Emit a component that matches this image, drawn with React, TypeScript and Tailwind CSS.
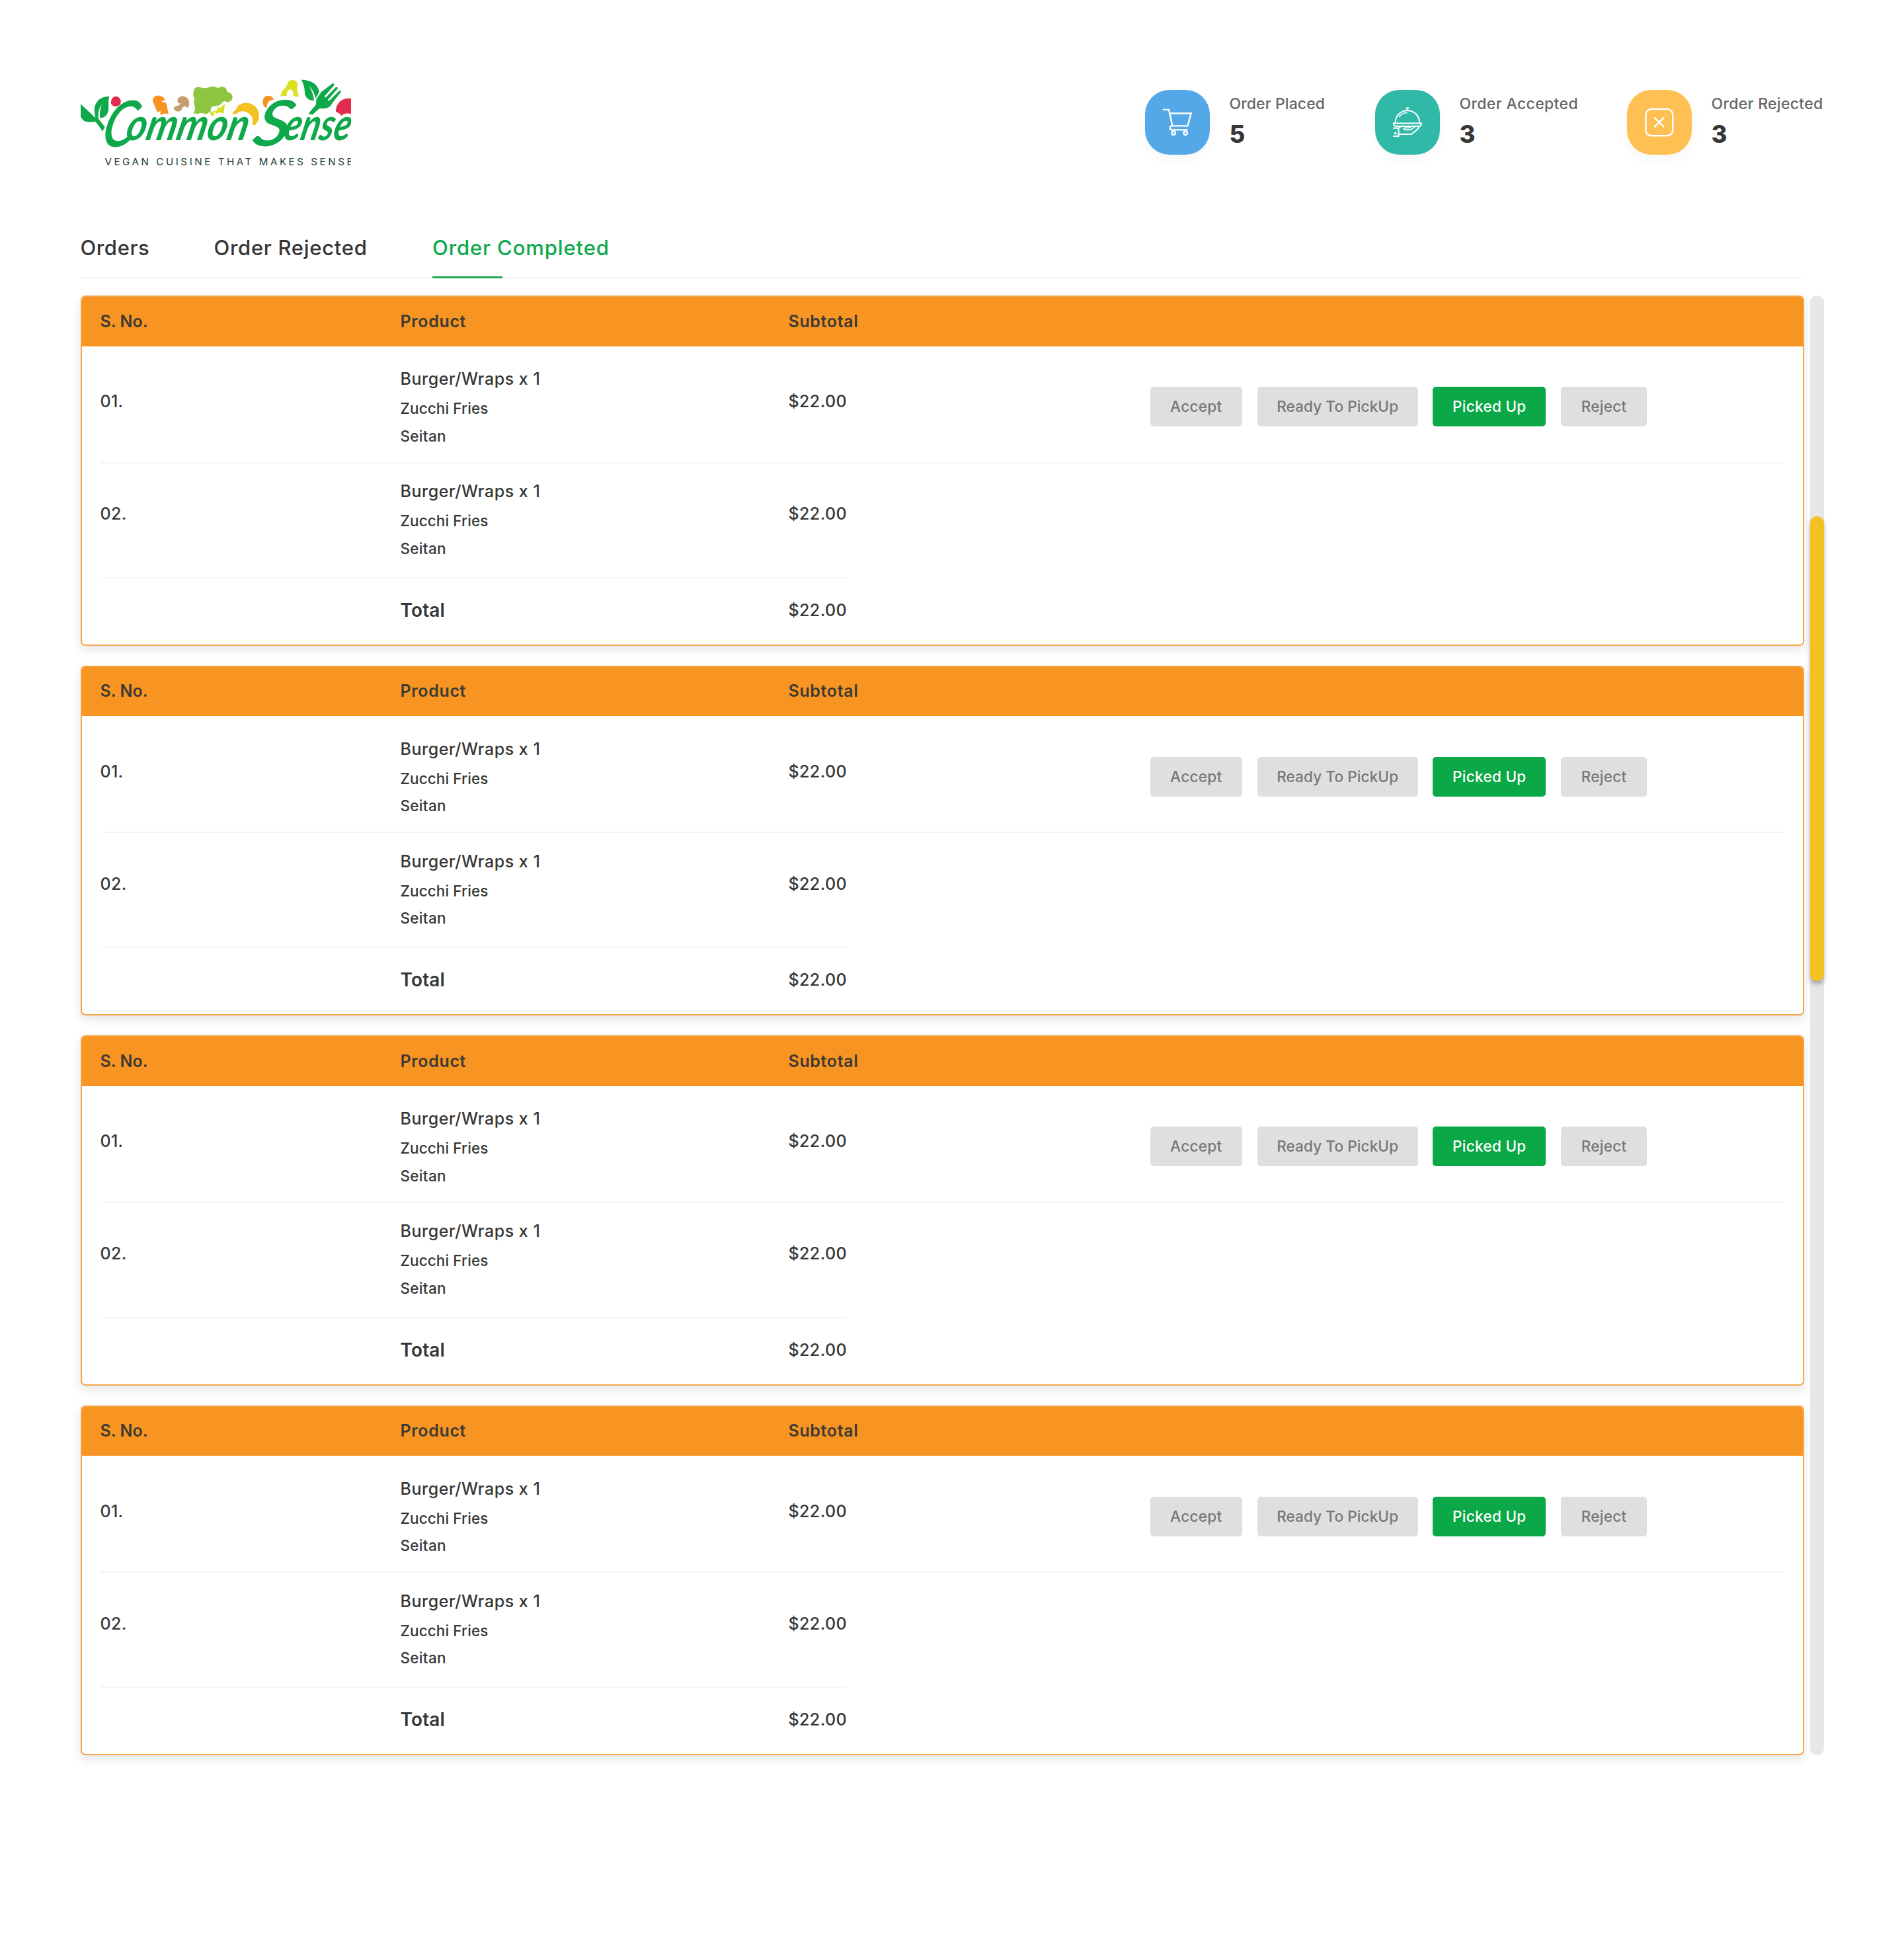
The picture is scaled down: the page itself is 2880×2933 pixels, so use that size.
import type { ReactNode } from 'react';

const GREEN = '#0fa84b';

function Logo() {
  return (
    <svg className="block h-[133.3px] w-[409.7px]" viewBox="64 55 1229 400" role="img" aria-label="Common Sense">
      {/* sprout */}
      <path fill={GREEN} d="M64 173 L131 236 C127 212 123 192 131 176 C141 151 163 139 193 138 C189 158 191 180 190 200 C187 222 172 237 151 238 C149 214 152 193 160 174 C146 193 142 214 145 240 L173 276 L164 297 L132 254 C108 257 82 256 73 244 L64 232 Z" />
      {/* vegetables */}
      <path fill="#e12d4e" d="M202 163 C203 146 214 137 225 138 C238 139 248 151 246 166 C243 180 231 186 220 184 C208 182 200 175 202 163 Z" />
      <path fill="#f79322" d="M391 160 C390 140 406 133 420 135 C437 137 447 147 446 157 C437 156 431 159 431 164 C440 163 449 165 453 171 L463 220 C449 213 440 216 430 222 L422 215 L433 208 C425 205 418 206 412 210 Z" />
      <path fill="#c69c6d" d="M503 160 C503 140 524 133 541 141 C557 150 562 174 552 187 C545 191 541 186 538 183 C529 183 525 188 524 196 C519 205 508 209 499 206 C489 202 484 193 487 187 C498 181 512 180 518 171 C509 171 504 167 503 160 Z" />
      <path fill="#8fc641" d="M577 117 C576 98 598 89 616 101 C630 101 637 100 646 97 C658 91 674 92 687 101 C704 89 727 95 729 119 C747 119 758 137 751 152 C745 165 729 167 719 160 C706 161 706 171 697 176 C686 186 667 178 657 189 C650 197 659 205 651 209 C642 211 639 216 635 221 C620 212 603 212 594 219 C588 214 583 215 577 218 C576 207 586 203 582 187 C578 173 575 160 582 149 C572 138 574 126 577 117 Z" />
      <path fill="#d7df23" d="M650 212 L662 205 L672 221 L659 230 Z M667 203 L685 203 L682 188 L703 190 L706 180 L719 174 L713 214 L694 212 L677 217 Z" />
      <path fill="#f3c21f" d="M752 211 L767 202 C775 174 800 166 822 168 C850 172 872 193 873 219 C875 240 866 260 853 270 L843 266 C849 243 843 223 819 211 C800 202 784 205 771 217 L758 220 Z" />
      <path fill="#f79322" d="M899 188 C886 170 888 146 905 137 C921 132 936 138 940 153 C921 154 909 165 909 189 Z" />
      <path fill="#dbe022" d="M972 140 C969 122 983 107 994 99 C1001 91 1000 79 1009 70 C1022 59 1043 64 1048 80 C1051 93 1044 104 1047 115 C1052 125 1054 133 1052 141 L1030 137 C1031 117 1023 105 1013 107 C1001 110 1000 123 999 137 L984 136 Z" />
      <path fill="#e12d4e" d="M1222 207 C1222 168 1251 143 1293 148 L1293 221 C1275 211 1259 217 1247 226 C1240 215 1231 212 1222 207 Z" />
      {/* leaf and fork */}
      <path fill={GREEN} d="M1066 63 C1108 63 1142 83 1147 119 L1129 149 C1127 128 1115 105 1101 91 C1112 111 1122 135 1123 158 C1097 157 1082 143 1081 122 C1081 98 1074 80 1066 63 Z" />
      <path fill={GREEN} d="M1098 216 L1131 177 C1136 166 1129 158 1135 149 L1156 118 L1207 80 Q1216 78 1214 88 L1170 139 L1175 144 L1222 97 Q1232 93 1230 104 L1186 154 L1191 159 L1238 113 Q1248 110 1244 120 L1206 169 C1195 193 1172 196 1148 193 L1115 222 Z" />
      {/* word mark */}
      <g fill={GREEN} fontFamily="Lato, sans-serif" fontStyle="italic">
        <g transform="translate(149 363) skewX(-15)">
          <text fontSize="284" fontWeight="400" stroke={GREEN} strokeWidth="5" textLength="140" lengthAdjust="spacingAndGlyphs">C</text>
        </g>
        <g transform="translate(262 338) skewX(-13)">
          <text fontSize="203" fontWeight="700" textLength="552" lengthAdjust="spacingAndGlyphs">ommon</text>
        </g>
        <g transform="translate(838 361) skewX(-15)">
          <text fontSize="284" fontWeight="400" stroke={GREEN} strokeWidth="5" textLength="158" lengthAdjust="spacingAndGlyphs">S</text>
        </g>
        <g transform="translate(978 338) skewX(-13)">
          <text fontSize="203" fontWeight="700" textLength="302" lengthAdjust="spacingAndGlyphs">ense</text>
        </g>
      </g>
      <text x="173" y="450" fill="#1d3d33" fontFamily="Inter, sans-serif" fontSize="45.5" textLength="1126" lengthAdjust="spacing">
        VEGAN CUISINE THAT MAKES SENSE
      </text>
    </svg>
  );
}

function CartIcon() {
  return (
    <svg className="size-full" viewBox="0 0 98 98" fill="none" stroke="#fff" strokeWidth="2.4">
      <path d="M27 30h9.2l5.4 24.7" />
      <path d="M38.3 35.7H70l-5.2 19H41.4c-2.6 0-3.6 1.5-3.6 3.1s1 2.9 3.4 2.9h23.6" />
      <circle cx="43.3" cy="65.5" r="2.7" />
      <circle cx="61.5" cy="65.5" r="2.7" />
    </svg>
  );
}

function ClocheIcon() {
  return (
    <svg className="size-full" viewBox="180.5 18 293 294" fill="none" stroke="#fff" strokeWidth="6">
      <path d="M320 101h15M327.500 101v11" />
      <path d="M272 170c0-34 24-58 55-58s56 24 56 58" />
      <path d="M289 142c7-12 18-19 38-20" strokeWidth="5" />
      <path d="M264 170h127c0 9-5 14-14 14H278c-9 0-14-5-14-14Z" />
      <path d="M262 192h25v37h-25M287 220h59l33-28v-8" />
      <path d="M287 192l13-7M364 184l-22 16h-27c-6-3-3-8 2-9h18c6-1 8-4 8-7" strokeWidth="5" />
      <circle cx="272.5" cy="216" r="4.5" fill="#fff" strokeWidth="3" />
    </svg>
  );
}

function RejectIcon() {
  return (
    <svg className="size-full" viewBox="0 0 98 98" fill="none" stroke="#fff" strokeWidth="2.5" strokeLinecap="round">
      <rect x="28.6" y="29.2" width="41" height="40.5" rx="8.5" />
      <path d="M42.3 42.5l13.4 13.4M55.7 42.5L42.3 55.9" />
    </svg>
  );
}

type StatProps = { label: string; value: string; tone: string; text: string; icon: ReactNode };

function Stat({ label, value, tone, text, icon }: StatProps) {
  return (
    <div className="flex gap-[30px]">
      <div className={`size-[97.5px] shrink-0 rounded-[37px] shadow-[0_10px_18px_rgba(0,0,0,0.03)] ${tone}`}>{icon}</div>
      <div className="whitespace-nowrap">
        <div className={`mt-[5px] text-[23px] leading-[32px] font-medium text-[#666] ${text}`}>{label}</div>
        <div className="mt-[8px] text-[36.5px] leading-[44px] font-extrabold text-[#363636]">{value}</div>
      </div>
    </div>
  );
}

const GRID = 'grid grid-cols-[454px_587px_547px_1fr]';

function OrderRow({ no, actions }: { no: string; actions?: boolean }) {
  return (
    <div className={`${GRID} whitespace-nowrap`}>
      <div className="pt-[34px] text-[25px] leading-[48px] font-medium tracking-[0.3px]">{no}</div>
      <div>
        <div className="pt-[1px] text-[25px] leading-[47px] font-medium tracking-[0.52px]">Burger/Wraps x 1</div>
        <div className="text-[22.5px] leading-[41.7px] font-medium tracking-[0.1px]">Zucchi Fries</div>
        <div className="text-[22.5px] leading-[41.7px] font-medium tracking-[0.3px]">Seitan</div>
      </div>
      <div className="pt-[34px] text-[25px] leading-[48px] font-medium tracking-[0.4px]">$22.00</div>
      {actions && (
        <div className="flex items-start gap-[22.5px] pt-[36px] text-[22.5px] leading-[60px] font-medium">
          <button className="w-[139.5px] rounded-[5px] bg-[#dfdfdf] tracking-[0.3px] text-[#777]">Accept</button>
          <button className="w-[243.3px] rounded-[5px] bg-[#dfdfdf] tracking-[0.12px] text-[#777]">Ready To PickUp</button>
          <button className="w-[171px] rounded-[5px] bg-[#0ba847] tracking-[0.3px] text-white">Picked Up</button>
          <button className="w-[130.5px] rounded-[5px] bg-[#dfdfdf] tracking-[0.3px] text-[#777]">Reject</button>
        </div>
      )}
    </div>
  );
}

function OrderCard() {
  return (
    <section className="h-[529.5px] shrink-0 overflow-hidden rounded-[7px] border-2 border-[#f3a64c] bg-white shadow-[0_6px_16px_rgba(0,0,0,0.11)]">
      <header className={`${GRID} -mx-[2px] -mt-[2px] h-[76.5px] items-center bg-[#f89522] px-[30px] pt-[2px] text-[25px] font-semibold text-[#3d3a33]`}>
        <span>S. No.</span>
        <span className="tracking-[0.65px]">Product</span>
        <span className="tracking-[0.65px]">Subtotal</span>
      </header>
      <div className="px-[28px]">
        <div className="h-[177px] border-b-2 border-[#f4f4f4] pt-[25.5px]">
          <OrderRow no="01." actions />
        </div>
        <div className="h-[174px] w-[1129px] border-b-2 border-[#f5f5f5] pt-[18.5px]">
          <OrderRow no="02." />
        </div>
        <div className={`${GRID} pt-[24px] leading-[48px]`}>
          <span />
          <span className="text-[28px] font-semibold tracking-[0.15px]">Total</span>
          <span className="text-[25px] font-medium tracking-[0.4px]">$22.00</span>
        </div>
      </div>
    </section>
  );
}

export default function App() {
  return (
    <div className="h-[2933px] w-[2880px] overflow-hidden bg-white pr-[121px] pl-[121.5px] font-['Inter',sans-serif] text-[#363636]">
      <div className="flex h-[337px] justify-between">
        <div className="pt-[118.3px]">
          <Logo />
        </div>
        <div className="grid grid-cols-[348px_381px_298px] pt-[136.3px]">
          <Stat label="Order Placed" value="5" tone="bg-[#54a8e7]" text="tracking-[0.1px]" icon={<CartIcon />} />
          <Stat label="Order Accepted" value="3" tone="bg-[#30b9a7]" text="tracking-[0.35px]" icon={<ClocheIcon />} />
          <Stat label="Order Rejected" value="3" tone="bg-[#fec053]" text="tracking-[0.3px]" icon={<RejectIcon />} />
        </div>
      </div>

      <nav className="flex h-[84px] w-[2607px] border-b-2 border-[#f4f4f4] text-[31px] leading-[75px] font-medium">
        <a className="w-[202px] tracking-[0.6px]">Orders</a>
        <a className="w-[330.5px] tracking-[0.7px]">Order Rejected</a>
        <a className="relative tracking-[0.88px] text-[#0fa84b]">
          Order Completed
          <span className="absolute top-[81px] left-0 h-[3px] w-[106px] bg-[#1fa655]" />
        </a>
      </nav>

      <div className="mt-[26px] flex justify-between">
        <main className="flex w-[2607.5px] flex-col gap-[30px]">
          <OrderCard />
          <OrderCard />
          <OrderCard />
          <OrderCard />
        </main>
        <div className="w-[21.5px] rounded-full bg-[#e7e7e7] pt-[334px]">
          <div className="h-[703px] rounded-full bg-[#f2c222] shadow-[0_5px_7px_rgba(0,0,0,0.3)]" />
        </div>
      </div>
    </div>
  );
}
